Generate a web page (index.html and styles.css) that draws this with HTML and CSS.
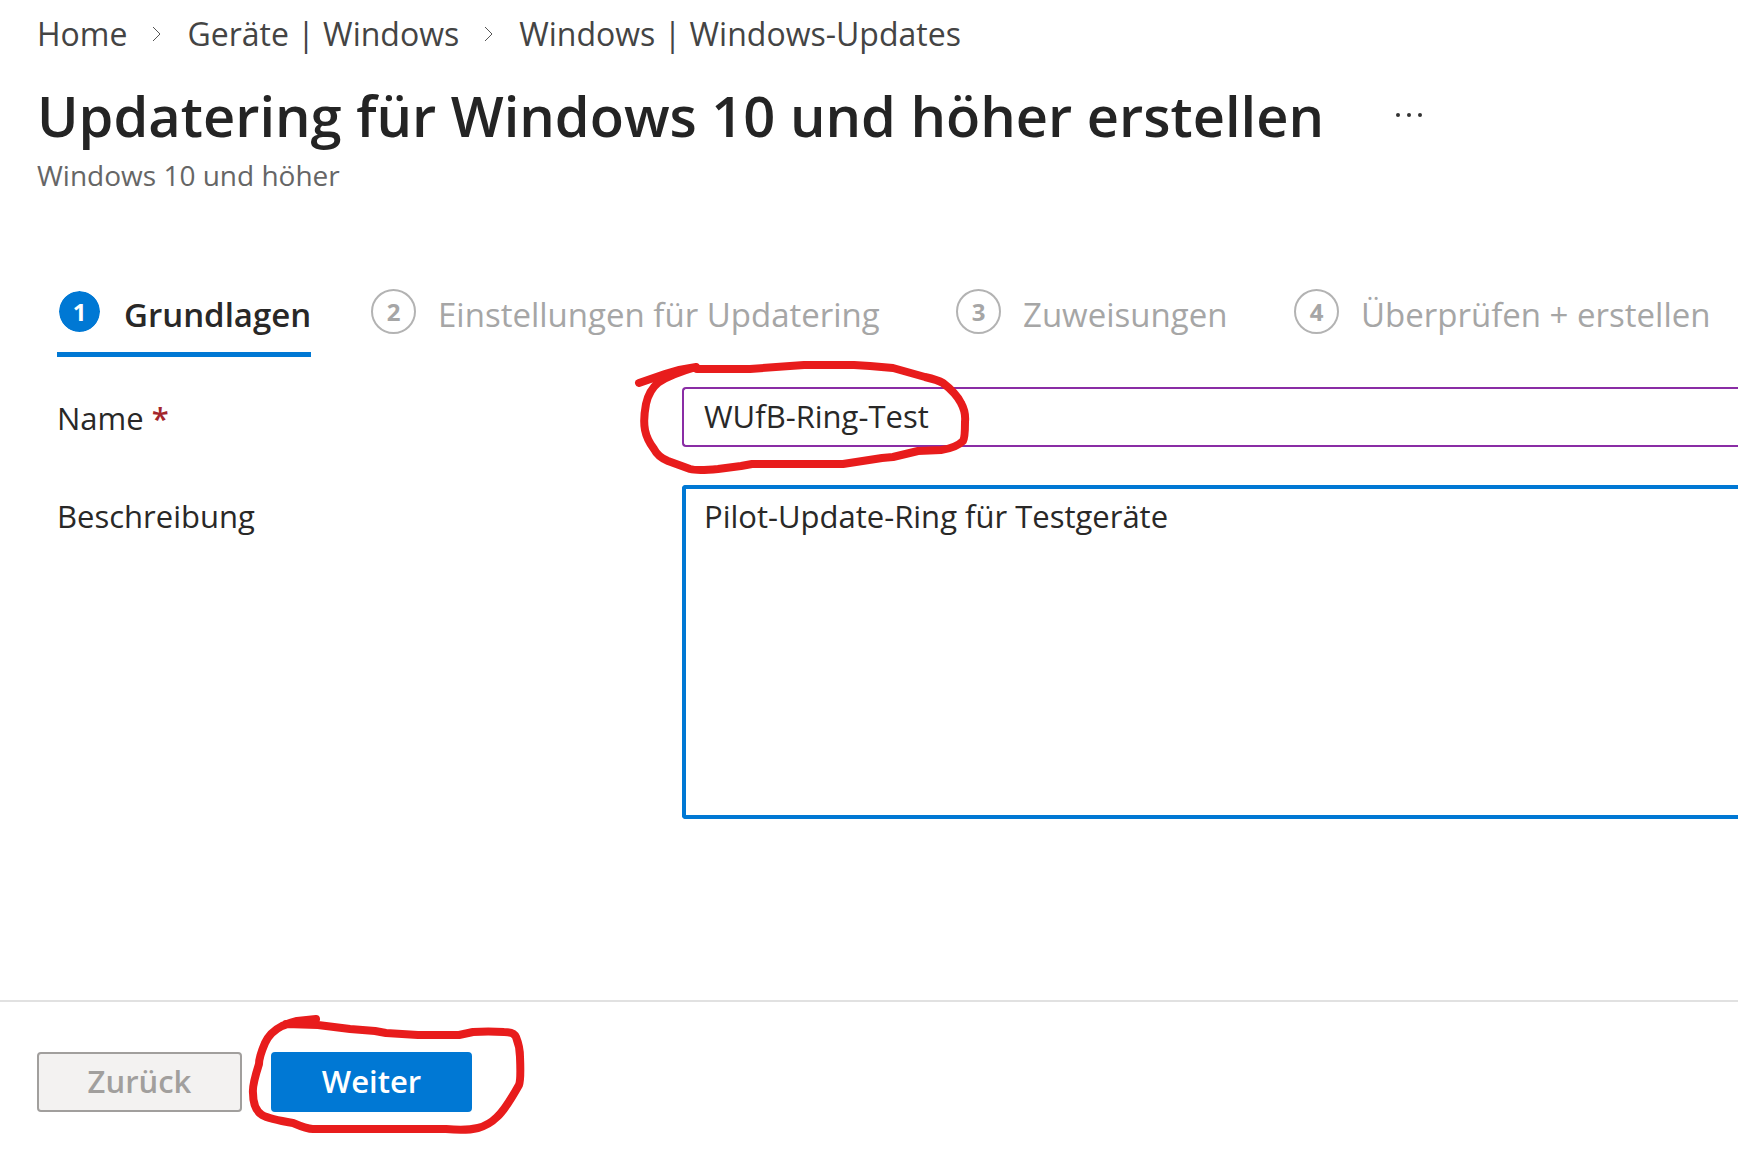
FILE: index.html
```html
<!DOCTYPE html>
<html lang="de">
<head>
  <meta charset="utf-8">
  <meta name="viewport" content="width=device-width, initial-scale=1">
  <title>Updatering für Windows 10 und höher erstellen</title>
  <link rel="stylesheet" href="styles.css">
</head>
<body>
  <header class="page-header">
    <nav class="breadcrumb" aria-label="Breadcrumb">
      <a href="#">Home</a>
      <svg class="chevron" viewBox="0 0 10 16" aria-hidden="true"><path d="M1 1l7 7-7 7"/></svg>
      <a href="#">Geräte | Windows</a>
      <svg class="chevron" viewBox="0 0 10 16" aria-hidden="true"><path d="M1 1l7 7-7 7"/></svg>
      <a href="#">Windows | Windows-Updates</a>
    </nav>
    <div class="title-row">
      <h1 class="title">Updatering für Windows 10 und höher erstellen</h1>
      <button class="more" type="button" aria-label="Mehr">
        <svg viewBox="0 0 28 6" aria-hidden="true"><circle cx="3" cy="3" r="2"/><circle cx="14" cy="3" r="2"/><circle cx="25" cy="3" r="2"/></svg>
      </button>
    </div>
    <p class="subtitle">Windows 10 und höher</p>
  </header>

  <main class="content">
    <nav class="steps" aria-label="Schritte">
      <button class="step step-active" type="button" aria-current="step"><span class="step-number">1</span><span>Grundlagen</span></button>
      <button class="step" type="button"><span class="step-number">2</span><span>Einstellungen für Updatering</span></button>
      <button class="step" type="button"><span class="step-number">3</span><span>Zuweisungen</span></button>
      <button class="step" type="button"><span class="step-number">4</span><span>Überprüfen + erstellen</span></button>
    </nav>

    <form class="form" id="ring-form">
      <label class="label" for="name">Name <span class="required">*</span></label>
      <div class="marked">
        <input class="field field-name" id="name" type="text" value="WUfB-Ring-Test" required>
        <svg class="marker marker-name" viewBox="634 360 336 116" aria-hidden="true">
          <path d="M639 383L665 374Q680 369 696 367Q672 374 659 382Q649 390 646 404Q643 420 645 430Q647 440 654 449Q658 457 668 461L690 469Q697 471 718 469L741 466L752 464H843L882 458L893 457L918 451L941 450Q956 448 963 441Q965 438 965 422Q966 412 961 403Q956 393 943 383Q938 380 925 377L893 368L870 366L854 365H804L750 369H697"/>
        </svg>
      </div>
      <label class="label" for="description">Beschreibung</label>
      <textarea class="field field-description" id="description">Pilot-Update-Ring für Testgeräte</textarea>
    </form>
  </main>

  <footer class="footer">
    <button class="button button-back" type="button" disabled>Zurück</button>
    <div class="marked">
      <button class="button button-next" type="submit" form="ring-form">Weiter</button>
      <svg class="marker marker-next" viewBox="248 1012 278 124" aria-hidden="true">
        <path d="M316 1019L297 1021Q289 1023 282 1026Q270 1032 265 1043Q259 1057 259 1064Q252 1086 253 1093Q253 1109 262 1115Q269 1119 293 1123Q307 1129 313 1129H446Q466 1131 478 1128Q489 1125 497 1117Q505 1110 519 1085Q521 1080 520 1057Q520 1047 516 1037Q514 1032 504 1032Q488 1031 473 1032L459 1035H418L386 1033L375 1031L350 1029L318 1025L286 1024"/>
      </svg>
    </div>
  </footer>
</body>
</html>
```

FILE: styles.css
```css
* {
  box-sizing: border-box;
}

body {
  margin: 0;
  min-height: 100vh;
  display: flex;
  flex-direction: column;
  overflow-x: hidden;
  background: #fff;
  color: #292827;
  font-family: "Segoe UI", "Open Sans", "Noto Sans", sans-serif;
  font-size: 31px;
  line-height: 44px;
}

button,
input,
textarea {
  font: inherit;
  color: inherit;
}

.page-header {
  padding: 12px 37px 0;
}

.breadcrumb {
  display: flex;
  align-items: center;
  gap: 25px;
  font-size: 32px;
}

.breadcrumb a {
  color: #444;
  text-decoration: none;
}

.chevron {
  width: 10px;
  height: 16px;
  fill: none;
  stroke: #555;
  stroke-width: 1;
}

.title-row {
  display: flex;
  align-items: center;
  gap: 71px;
  margin-top: 19px;
}

.title {
  margin: 0;
  font-size: 56px;
  font-weight: 600;
  line-height: 80px;
  color: #242424;
}

.more {
  display: flex;
  padding: 0;
  border: 0;
  background: none;
}

.more svg {
  width: 28px;
  height: 6px;
  fill: #333;
}

.subtitle {
  margin: 0;
  font-size: 28px;
  line-height: 40px;
  color: #666;
}

.content {
  flex: 1;
  padding: 94px 0 0 57px;
}

.steps {
  display: grid;
  grid-template-columns: 314px 585px 338px auto;
  justify-content: start;
  justify-items: start;
}

.step {
  display: flex;
  gap: 22px;
  height: 68px;
  padding: 0;
  border: 0;
  border-bottom: 5px solid transparent;
  background: none;
  color: #a6a6a6;
  font-size: 33px;
  line-height: 52px;
  white-space: nowrap;
}

.step-number {
  width: 45px;
  height: 45px;
  border: 2px solid #b3b3b3;
  border-radius: 50%;
  font-size: 24px;
  font-weight: 700;
  line-height: 41px;
  text-align: center;
}

.step-active {
  border-bottom-color: #0078d4;
  color: #292827;
  font-weight: 600;
}

.step-active .step-number {
  border-color: #fff;
  background: #0078d4;
  background-clip: padding-box;
  color: #fff;
}

.form {
  display: grid;
  grid-template-columns: 625px 1fr;
  row-gap: 38px;
  margin-top: 30px;
}

.label {
  padding-top: 9px;
}

.required {
  color: #a4262c;
  font-weight: 600;
}

.marked {
  position: relative;
}

.field {
  display: block;
  width: 100%;
  border: 2px solid #8a2da5;
  border-right: 0;
  border-radius: 4px 0 0 4px;
  outline: 0;
  background: #fff;
}

.field-name {
  height: 60px;
  padding: 0 20px 2px;
}

.field-description {
  height: 334px;
  padding: 5px 18px;
  border: 4px solid #0078d4;
  border-right: 0;
  resize: none;
}

.marker {
  position: absolute;
  fill: none;
  stroke: #e81c1c;
  stroke-width: 8;
  stroke-linecap: round;
  stroke-linejoin: round;
  pointer-events: none;
}

.marker-name {
  left: -48px;
  top: -27px;
  width: 336px;
  height: 116px;
}

.marker-next {
  left: -23px;
  top: -40px;
  width: 278px;
  height: 124px;
}

.footer {
  display: flex;
  gap: 29px;
  padding: 50px 37px 41px;
  border-top: 2px solid #e1e1e1;
}

.button {
  display: block;
  height: 60px;
  padding: 0 0 2px;
  border: 2px solid #0078d4;
  border-radius: 4px;
  font-weight: 600;
}

.button-back {
  width: 205px;
  border-color: #a19f9d;
  background: #f3f2f1;
  color: #a19f9d;
}

.button-next {
  width: 201px;
  background: #0078d4;
  color: #fff;
}
```
